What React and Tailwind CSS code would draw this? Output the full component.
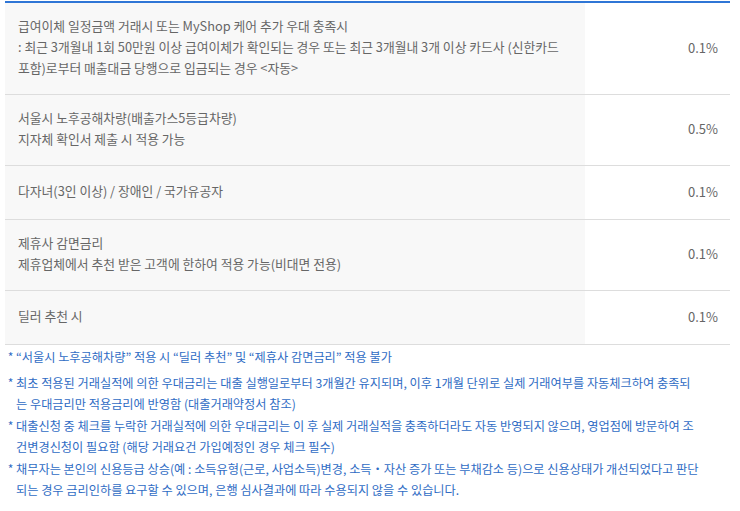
import React from "react";

const rows = [
  {
    lines: [
      "급여이체 일정금액 거래시 또는 MyShop 케어 추가 우대 충족시",
      ": 최근 3개월내 1회 50만원 이상 급여이체가 확인되는 경우 또는 최근 3개월내 3개 이상 카드사 (신한카드",
      "포함)로부터 매출대금 당행으로 입금되는 경우 <자동>",
    ],
    rate: "0.1%",
  },
  {
    lines: ["서울시 노후공해차량(배출가스5등급차량)", "지자체 확인서 제출 시 적용 가능"],
    rate: "0.5%",
  },
  { lines: ["다자녀(3인 이상) / 장애인 / 국가유공자"], rate: "0.1%" },
  {
    lines: ["제휴사 감면금리", "제휴업체에서 추천 받은 고객에 한하여 적용 가능(비대면 전용)"],
    rate: "0.1%",
  },
  { lines: ["딜러 추천 시"], rate: "0.1%" },
];

const notes = [
  ["“서울시 노후공해차량” 적용 시 “딜러 추천” 및 “제휴사 감면금리” 적용 불가"],
  [
    "최초 적용된 거래실적에 의한 우대금리는 대출 실행일로부터 3개월간 유지되며, 이후 1개월 단위로 실제 거래여부를 자동체크하여 충족되",
    "는 우대금리만 적용금리에 반영함 (대출거래약정서 참조)",
  ],
  [
    "대출신청 중 체크를 누락한 거래실적에 의한 우대금리는 이 후 실제 거래실적을 충족하더라도 자동 반영되지 않으며, 영업점에 방문하여 조",
    "건변경신청이 필요함 (해당 거래요건 가입예정인 경우 체크 필수)",
  ],
  [
    "채무자는 본인의 신용등급 상승(예 : 소득유형(근로, 사업소득)변경, 소득・자산 증가 또는 부채감소 등)으로 신용상태가 개선되었다고 판단",
    "되는 경우 금리인하를 요구할 수 있으며, 은행 심사결과에 따라 수용되지 않을 수 있습니다.",
  ],
];

const font = { fontFamily: '"Noto Sans CJK KR", "Noto Sans", sans-serif' };

export default function App() {
  return (
    <div className="w-[740px] h-[511px] bg-white overflow-hidden" style={font}>
      <div className="ml-[5px] mt-[1px] w-[725px] border-t-2 border-[#2f76d6]">
        {rows.map((row, i) => (
          <div key={i} className="grid grid-cols-[580px_1fr] border-b border-[#dddddd]">
            <div className="bg-[#f8f8f8] flex flex-col justify-center min-h-[53px] pt-[12px] pb-[16px] pl-[13px] text-[12.8px] leading-[21px] text-[#666666]">
              {row.lines.map((l, j) => (
                <div key={j} className="whitespace-nowrap">{l}</div>
              ))}
            </div>
            <div className="flex items-center justify-end pr-[12px] pb-[2px] text-[13px] text-[#666666]">
              {row.rate}
            </div>
          </div>
        ))}
      </div>

      <ul className="ml-[5px] mt-[2px] w-[725px] flex flex-col gap-[1px]">
        {notes.map((n, i) => (
          <li
            key={i}
            className={`flex text-[12.2px] leading-[21px] text-[#2f6cc4] ${i === 0 ? "mb-[4px]" : ""}`}
          >
            <span className="w-[11px] shrink-0 text-center">*</span>
            <div>
              {n.map((l, j) => (
                <div key={j} className="whitespace-nowrap h-[21px]">{l}</div>
              ))}
            </div>
          </li>
        ))}
      </ul>
    </div>
  );
}
